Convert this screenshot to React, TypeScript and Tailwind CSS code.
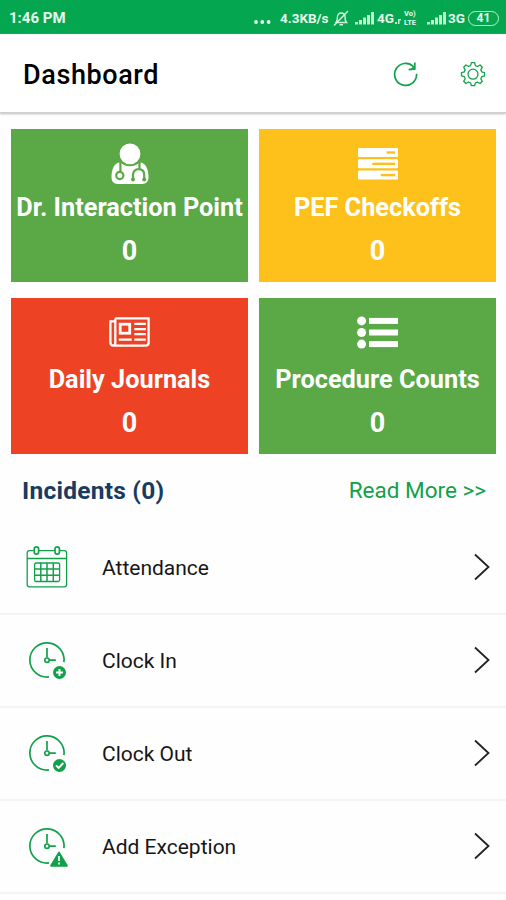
import type { ReactNode } from "react";

const GREEN = "#12a14b";

function SignalIcon() {
  return (
    <svg width="20" height="14" viewBox="0 0 20 14" fill="#c3edd0" className="shrink-0">
      <rect x="0" y="11" width="3" height="2.5" />
      <rect x="4" y="9" width="3" height="4.5" />
      <rect x="8" y="6.5" width="3" height="7" />
      <rect x="12" y="4" width="3" height="9.5" />
      <rect x="16" y="1" width="3" height="12.5" />
    </svg>
  );
}

function BellOffIcon() {
  return (
    <svg width="16" height="17" viewBox="0 0 16 17" fill="none" stroke="#d3f2dd" strokeWidth="1.4">
      <path d="M3 12.5h10.5c-1.6-1.6-1.4-3-1.4-5.2 0-2.6-1.6-4.3-3.9-4.3S4.4 4.7 4.4 7.3c0 2.2 0 3.6-1.4 5.2z" />
      <path d="M6.5 14.8H10M15 1L1 15.5" />
    </svg>
  );
}

function RefreshIcon() {
  return (
    <svg width="26" height="26" viewBox="0 0 26 26" fill="none" stroke={GREEN} strokeWidth="1.7">
      <path d="M23.6 12.8a11 11 0 1 1-3.2-7.2" />
      <path d="M21.8 1.5v6.400l-6.200.8" />
      <path d="M22 4v4.300l-5 .5z" fill={GREEN} stroke="none" />
    </svg>
  );
}

function GearIcon() {
  return (
    <svg width="26" height="26" viewBox="0 0 26 26" fill="none" stroke={GREEN} strokeWidth="1.3" strokeLinejoin="round">
      <path d="M11.4 1.7h3.2l.8 2.900q1 .3 2 .9l2.700-1.500 2.200 2.200-1.500 2.700q.6 1 .9 2l2.800.8v3.100l-2.800.8q-.3 1-.9 2l1.500 2.700-2.200 2.200-2.700-1.500q-1 .6-2 .9l-.8 2.800h-3.200l-.8-2.800q-1-.3-2-.9l-2.700 1.500-2.200-2.200 1.500-2.700q-.6-1-.9-2l-2.800-.8v-3.100l2.800-.8q.3-1 .9-2l-1.500-2.700 2.200-2.200 2.700 1.500q1-.6 2-.9z" />
      <circle cx="13" cy="13.2" r="5" />
    </svg>
  );
}

function DoctorIcon() {
  return (
    <svg width="38" height="42" viewBox="0 0 38 42">
      <circle cx="19" cy="10.8" r="10.4" fill="#fff" />
      <path d="M9.2 19.3c2.600 2.500 6 3.900 9.800 3.900s7.200-1.400 9.800-3.900c6.200.8 8.700 7 8.700 15 0 4.200-2.500 6.700-6.300 6.700H6.800C3 41 .5 38.500.5 34.300c0-8 2.500-14.200 8.700-15z" fill="#fff" />
      <g fill="none" stroke="#5aa846" strokeWidth="2.2">
        <path d="M9.400 18.500v11M28.500 18.500v7.500M22 37v-5.200c0-3.400 2.200-5.600 5.600-5.600s5.600 2.200 5.600 5.600V36" />
        <circle cx="8.8" cy="32.5" r="3.6" />
      </g>
      <circle cx="22" cy="36.4" r="2" fill="#5aa846" />
      <circle cx="33.2" cy="36.4" r="2" fill="#5aa846" />
    </svg>
  );
}

function TasksIcon() {
  return (
    <svg width="40" height="32" viewBox="0 0 40 32">
      <g fill="#fff">
        <rect width="40" height="9" rx="1.3" />
        <rect y="11.3" width="40" height="9" rx="1.3" />
        <rect y="22.6" width="40" height="9" rx="1.3" />
      </g>
      <g fill="#fec11c">
        <rect x="28.5" y="3.3" width="8.7" height="2.4" />
        <rect x="14.3" y="14.6" width="22.9" height="2.4" />
        <rect x="22.8" y="25.9" width="14.4" height="2.4" />
      </g>
    </svg>
  );
}

function NewspaperIcon() {
  return (
    <svg width="41" height="30" viewBox="0 0 41 30" fill="none" stroke="#fff">
      <path d="M6.300 1.400h33.300v24c0 2-1 3.200-3 3.200H4.300c-1.900 0-2.900-1.300-2.900-3.100V4.300h4.900M6.300 1.400v24c0 2-.8 3.200-2 3.200" strokeWidth="2.3" />
      <rect x="11.2" y="7.2" width="9.5" height="9" strokeWidth="2.8" />
      <path d="M9.800 22.600h13M25.300 6.900h11.500M25.300 12.200h11.500M25.300 17.200h11.500M25.300 22.600h11.500" strokeWidth="2.3" />
    </svg>
  );
}

function ListIcon() {
  return (
    <svg width="41" height="33" viewBox="0 0 41 33" fill="#fff">
      <circle cx="4.6" cy="4.9" r="4.5" />
      <circle cx="4.6" cy="16.5" r="4.5" />
      <circle cx="4.6" cy="28.1" r="4.5" />
      <rect x="12" y="1.9" width="29" height="6" />
      <rect x="12" y="13.5" width="29" height="6" />
      <rect x="12" y="25.1" width="29" height="6" />
    </svg>
  );
}

function CalendarIcon() {
  return (
    <svg width="42" height="44" viewBox="0 0 42 44" fill="none" stroke={GREEN} strokeWidth="1.3">
      <path d="M7.500 5.700H3.500C2 5.700 1.200 6.500 1.200 8v31.500c0 1.500.8 2.300 2.300 2.300h34.800c1.500 0 2.300-.8 2.300-2.300V8c0-1.500-.8-2.300-2.300-2.300h-4.600M13 5.700h15.500M1.200 13.500h39.400" />
      <rect x="8.2" y="1.8" width="4.4" height="7.4" rx="2.2" strokeWidth="1.7" />
      <rect x="29" y="1.8" width="4.4" height="7.4" rx="2.2" strokeWidth="1.7" />
      <rect x="8.6" y="18" width="25" height="18.5" rx="1.5" />
      <path d="M14.800 18v18.500M21 18v18.500M27.300 18v18.500M8.600 24.100h25M8.600 30.300h25" strokeWidth="1.5" />
    </svg>
  );
}

function ClockIcon({ children }: { children: ReactNode }) {
  return (
    <svg width="42" height="46" viewBox="0 -4 42 46" fill="none" stroke={GREEN} strokeWidth="1.7">
      <path d="M37.900 21.200A17.100 17.100 0 1 0 23 35.900" />
      <path d="M21 7v9.600M23.300 19.200h6.500" />
      <circle cx="21" cy="19.2" r="2.2" />
      {children}
    </svg>
  );
}

function PlusBadge() {
  return (
    <>
      <circle cx="33.5" cy="31.5" r="6.5" fill={GREEN} stroke="none" />
      <path d="M33.500 28v7M30 31.500h7" stroke="#fff" strokeWidth="2" />
    </>
  );
}

function CheckBadge() {
  return (
    <>
      <circle cx="33.5" cy="31.5" r="6.5" fill={GREEN} stroke="none" />
      <path d="M30 31.300l2.700 2.700 4.600-5" stroke="#fff" strokeWidth="1.9" />
    </>
  );
}

function WarningBadge() {
  return (
    <>
      <path d="M33 25.500l8 13.300H25z" fill={GREEN} stroke={GREEN} strokeLinejoin="round" />
      <path d="M33 29v5M33 35.400v2" stroke="#fff" strokeWidth="1.7" />
    </>
  );
}

function Card({ title, className, icon }: { title: string; className: string; icon: ReactNode }) {
  return (
    <div className={`flex flex-col items-center whitespace-nowrap pb-4 text-[25.3px] font-bold leading-[30px] text-white ${className}`}>
      <div className="flex h-[42px] items-center">{icon}</div>
      <h2 className="mt-auto">{title}</h2>
      <p className="mt-[13px] text-[27px]">0</p>
    </div>
  );
}

const rows = [
  { label: "Attendance", icon: <CalendarIcon /> },
  { label: "Clock In", icon: <ClockIcon><PlusBadge /></ClockIcon> },
  { label: "Clock Out", icon: <ClockIcon><CheckBadge /></ClockIcon> },
  { label: "Add Exception", icon: <ClockIcon><WarningBadge /></ClockIcon> },
];

export default function App() {
  return (
    <div className="h-[900px] w-[506px] overflow-hidden bg-[#fefefe] font-['Roboto',sans-serif] text-black">

      {/* Status bar */}
      <div className="flex h-[34px] items-center bg-[#04a74f] pl-[9px] pr-[7px] pt-0.5 text-[#e6f9ec]">
        <span className="text-[15px] font-bold">1:46 PM</span>
        <div className="ml-auto flex items-center whitespace-nowrap text-[13.5px] font-bold">
          <svg width="17" height="4" viewBox="0 0 17 4" fill="#e6f9ec" className="mr-[9px] mt-2">
            <circle cx="2" cy="2" r="1.9" />
            <circle cx="8.3" cy="2" r="1.9" />
            <circle cx="14.6" cy="2" r="1.9" />
          </svg>
          <span className="w-[50px]">4.3KB/s</span>
          <span className="ml-[3px] w-[22px]"><BellOffIcon /></span>
          <SignalIcon />
          <span className="ml-0.5 w-[18px]">4G</span>
          <svg width="6" height="6" viewBox="0 0 6 6" fill="#c3edd0" className="mr-[3px] mt-1.5">
            <path d="M0 4h2v2H0zM3 1h3v1.500H4.500V6H3z" />
          </svg>
          <span className="flex w-[18px] flex-col text-[7.5px] leading-[9px]">
            <span>Vo)</span>
            <span>LTE</span>
          </span>
          <span className="ml-[5px]"><SignalIcon /></span>
          <span className="ml-px w-5">3G</span>
          <span className="flex h-[15px] w-[31px] items-center justify-center rounded-full border-[1.5px] border-[#c3edd0] text-[12px] leading-none">
            41
          </span>
        </div>
      </div>

      {/* Header */}
      <header className="flex h-[79px] items-center border-b border-[#d0d0d0] bg-white pl-[23px] pr-5 shadow-[0_1px_2px_#bbb]">
        <h1 className="pt-1 text-[27px] font-medium tracking-[0.6px]">Dashboard</h1>
        <div className="ml-auto flex gap-[41px] pt-px">
          <RefreshIcon />
          <GearIcon />
        </div>
      </header>

      {/* Summary cards */}
      <section className="grid grid-cols-[237px_237px] gap-x-[11px] gap-y-4 pl-[11px] pt-[15.5px]">
        <Card title="Dr. Interaction Point" className="h-[153px] bg-[#5aa846] pt-[14px]" icon={<DoctorIcon />} />
        <Card title="PEF Checkoffs" className="h-[153px] bg-[#fec11c] pt-[14px]" icon={<TasksIcon />} />
        <Card title="Daily Journals" className="h-[156px] bg-[#ee4224] pt-[13.5px]" icon={<NewspaperIcon />} />
        <Card title="Procedure Counts" className="h-[156px] bg-[#5aa846] pt-[13.5px]" icon={<ListIcon />} />
      </section>

      {/* Incidents */}
      <section className="flex h-[68px] items-center justify-between pl-[22px] pr-5 pt-[7px]">
        <h2 className="text-[24.5px] font-bold tracking-[0.25px] text-[#173b61]">Incidents (0)</h2>
        <a href="#" className="text-[22.5px] text-[#12a14b]">Read More &gt;&gt;</a>
      </section>

      <ul>
        {rows.map((row) => (
          <li key={row.label} className="flex h-[93px] items-center border-b-2 border-[#f4f4f4] pl-[26px] pr-4">
            <span className="w-[76px]">{row.icon}</span>
            <span className="pt-1 text-[21px] text-[#161616]">{row.label}</span>
            <svg width="16" height="28" viewBox="0 0 16 28" fill="none" stroke="#222" strokeWidth="1.8" className="ml-auto">
              <path d="M1 1.500L14.500 14 1 26.500" />
            </svg>
          </li>
        ))}
      </ul>
    </div>
  );
}
